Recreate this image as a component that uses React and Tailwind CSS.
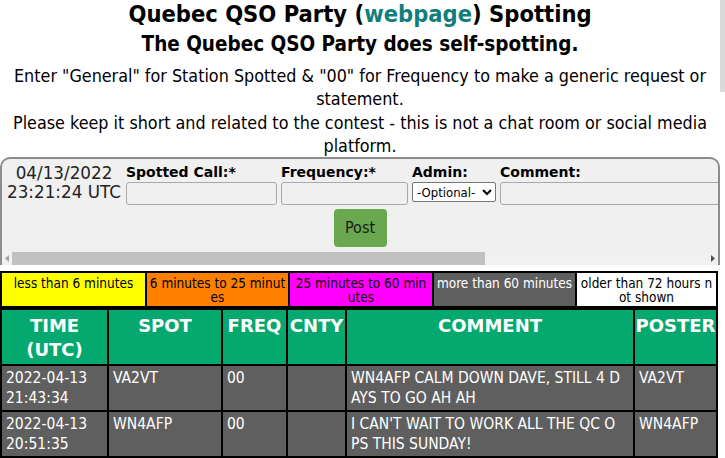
import React from 'react';

const verdana = { fontFamily: '"DejaVu Sans", Verdana, sans-serif' };
const narrow = { fontFamily: '"DejaVu Sans Condensed", "DejaVu Sans", sans-serif', fontStretch: 'condensed' };

const legend = [
  { text: 'less than 6 minutes', cls: 'bg-[#ffff00] text-black', w: 'w-[143px]' },
  { text: '6 minutes to 25 minutes', cls: 'bg-[#ff8000] text-black', w: 'w-[141px]' },
  { text: '25 minutes to 60 minutes', cls: 'bg-[#ff00ff] text-black', w: 'w-[142px]' },
  { text: 'more than 60 minutes', cls: 'bg-[#5f5f5f] text-white', w: 'w-[141px]' },
  { text: 'older than 72 hours not shown', cls: 'bg-white text-black', w: 'w-[139px]' },
];

const spots = [
  { time: ['2022-04-13', '21:43:34'], spot: 'VA2VT', freq: '00', cnty: '', comment: 'WN4AFP CALM DOWN DAVE, STILL 4 DAYS TO GO AH AH', poster: 'VA2VT' },
  { time: ['2022-04-13', '20:51:35'], spot: 'WN4AFP', freq: '00', cnty: '', comment: "I CAN'T WAIT TO WORK ALL THE QC OPS THIS SUNDAY!", poster: 'WN4AFP' },
];

function Field({ label, width, children }) {
  return (
    <div className="flex flex-col shrink-0 mr-[4px]">
      <span className="text-[14px] leading-[17px] font-bold text-black" style={verdana}>{label}</span>
      {children || (
        <input className={`${width} h-[23px] mt-[1px] border border-[#a9a9a9] rounded-[3px] bg-[#f0f0f0]`} />
      )}
    </div>
  );
}

export default function App() {
  return (
    <div className="flex w-[725px] bg-white">
      <div className="w-[720px]">
        {/* Encabezado */}
        <header className="text-center text-black" style={narrow}>
          <h1 className="text-[23.5px] leading-[26px] font-bold pt-[1px]">
            Quebec QSO Party (<span className="text-[#127d7a]">webpage</span>) Spotting
          </h1>
          <h2 className="text-[20.5px] leading-[26px] font-bold mt-[4px]">
            The Quebec QSO Party does self-spotting.
          </h2>
          <p className="text-[17.8px] leading-[23.3px] mt-[7px] px-[6px]">
            Enter "General" for Station Spotted &amp; "00" for Frequency to make a generic request or statement.
            <br />
            Please keep it short and related to the contest - this is not a chat room or social media platform.
          </p>
        </header>

        {/* Formulario */}
        <div className="border-2 border-b-0 border-[#8c8c8c] rounded-t-[10px] bg-[#f0f0f0] overflow-hidden">
          <div className="flex items-start pt-[5px] whitespace-nowrap">
            <div className="w-[124px] shrink-0 text-center text-[16.8px] leading-[19px] text-[#222]" style={verdana}>
              04/13/2022
              <br />
              23:21:24 UTC
            </div>
            <Field label="Spotted Call:*" width="w-[151px]" />
            <Field label="Frequency:*" width="w-[127px]" />
            <Field label="Admin:">
              <select className="w-[84px] h-[20px] mt-[1px] border border-[#767676] rounded-[2px] bg-white text-[13px] text-black" style={narrow}>
                <option>-Optional-</option>
              </select>
            </Field>
            <Field label="Comment:" width="w-[300px]" />
          </div>
          <div className="flex justify-center mt-[4px]">
            <button className="w-[53px] h-[38px] bg-[#6aa84f] rounded-[4px] text-[16px] text-[#1a1a1a]" style={narrow}>
              Post
            </button>
          </div>
          {/* Barra de desplazamiento */}
          <div className="flex items-center h-[13px] mt-[5px] bg-[#f1f1f1]">
            <div className="w-[10px] flex justify-center">
              <svg width="4" height="7" viewBox="0 0 4 7"><path d="M4 0 L0 3.5 L4 7 Z" fill="#a3a3a3" /></svg>
            </div>
            <div className="w-[473px] h-[13px] bg-[#c1c1c1]" />
            <div className="flex-1" />
            <div className="w-[10px] flex justify-center">
              <svg width="4" height="7" viewBox="0 0 4 7"><path d="M0 0 L4 3.5 L0 7 Z" fill="#505050" /></svg>
            </div>
          </div>
        </div>

        {/* Leyenda */}
        <table className="mt-[6px] border-separate border-spacing-[2px] bg-black table-fixed w-[718px]" style={narrow}>
          <tbody>
            <tr>
              {legend.map((l) => (
                <td key={l.text} className={`${l.cls} ${l.w} align-top text-center text-[13.5px] leading-[14px] pt-[3px] pb-[2px] px-[2px] break-all`}>
                  {l.text}
                </td>
              ))}
            </tr>
          </tbody>
        </table>

        {/* Tabla de spots */}
        <table className="border-separate border-spacing-[2px] bg-black table-fixed w-[718px]">
          <thead>
            <tr className="bg-[#05a86f] text-white text-[18px] leading-[24px] font-bold" style={verdana}>
              <th className="w-[105px] align-top pt-[4px] pb-[2px]">TIME<br />(UTC)</th>
              <th className="w-[112px] align-top pt-[4px]">SPOT</th>
              <th className="w-[63px] align-top pt-[4px]">FREQ</th>
              <th className="w-[57px] align-top pt-[4px]">CNTY</th>
              <th className="w-[286px] align-top pt-[4px]">COMMENT</th>
              <th className="w-[81px] align-top pt-[4px]">POSTER</th>
            </tr>
          </thead>
          <tbody>
            {spots.map((s) => (
              <tr key={s.spot} className="bg-[#5f5f5f] text-white text-[15.5px] leading-[20px]" style={narrow}>
                <td className="align-top pl-[4px] pt-[2px] pb-[2px]">{s.time[0]}<br />{s.time[1]}</td>
                <td className="align-top pl-[4px] pt-[2px]">{s.spot}</td>
                <td className="align-top pl-[4px] pt-[2px]">{s.freq}</td>
                <td className="align-top pl-[4px] pt-[2px]">{s.cnty}</td>
                <td className="align-top pl-[4px] pr-[11px] pt-[2px] break-all">{s.comment}</td>
                <td className="align-top pl-[4px] pt-[2px]">{s.poster}</td>
              </tr>
            ))}
          </tbody>
        </table>
      </div>
      <div className="w-[5px] flex flex-col">
        <div className="h-[92px] bg-[#dadada]" />
      </div>
    </div>
  );
}
